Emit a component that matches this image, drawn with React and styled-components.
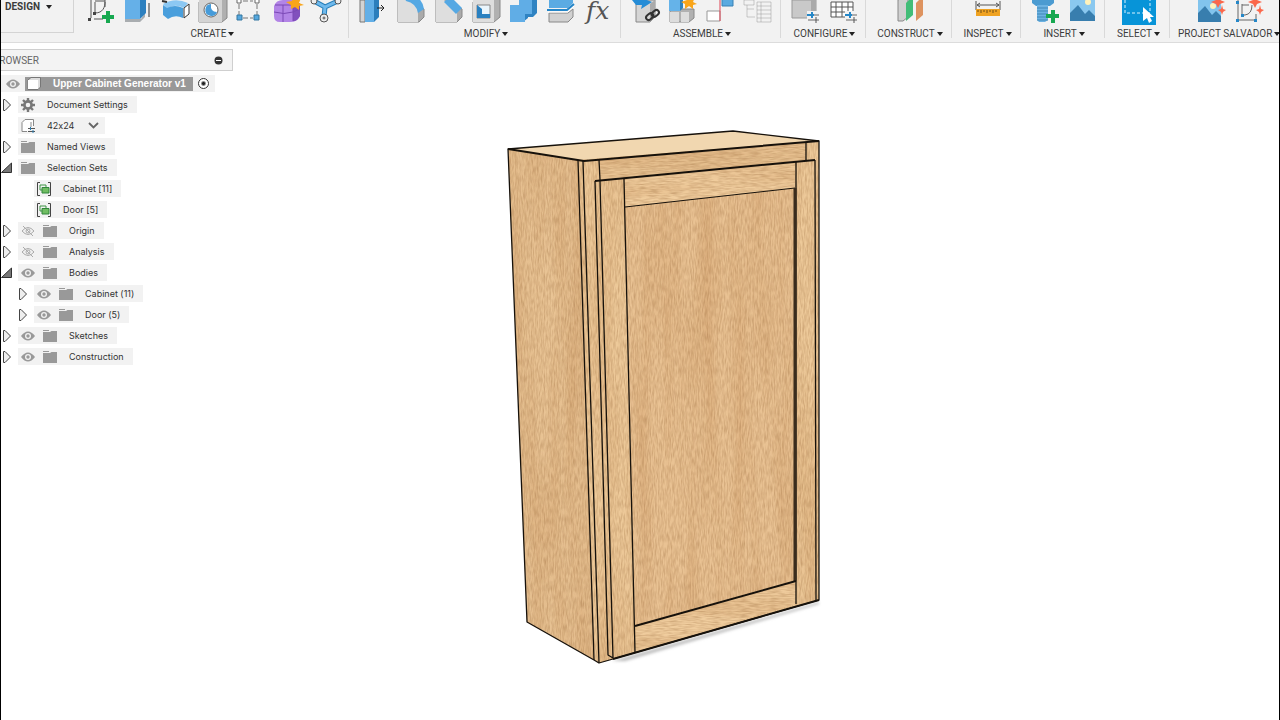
import styled, {createGlobalStyle, css} from "styled-components"

const GlobalStyle = createGlobalStyle`
  * {
    box-sizing: border-box;
  }

  body {
    margin: 0;
    background: #fff;
    font-family: "Liberation Sans", Arial, sans-serif;
  }

  button {
    margin: 0;
    padding: 0;
    border: 0;
    background: none;
    font: inherit;
    color: inherit;
  }
`

const Page = styled.div`
  display: flex;
  flex-direction: column;
  min-height: 100vh;
  overflow: hidden;
  border: 0 solid #000;
  border-width: 0 1px;
  background: #fff;
`

const Toolbar = styled.header`
  display: flex;
  height: 43px;
  overflow: hidden;
  background: #f2f2f2;
  border-bottom: 1px solid #dcdcdc;
  font-family: Roboto, sans-serif;
  font-size: 10px;
  line-height: 12px;
  color: #3c3c3c;
`

const WorkspaceButton = styled.button`
  flex: none;
  display: flex;
  align-items: flex-start;
  gap: 6px;
  width: 73px;
  height: 33px;
  padding: 1px 0 0 4px;
  border: solid #d4d4d4;
  border-width: 0 1px 1px 0;
  font-weight: 700;
`

const Group = styled.section`
  flex: ${props => props.$last ? "1 0" : "0 0"} ${props => props.$width}px;
  display: flex;
  flex-direction: column;
  align-items: center;
  gap: 2px;
  padding-left: ${props => props.$last ? 8 : 2}px;

  ${props => !props.$last && css`
    background: linear-gradient(#d9d9d9, #d9d9d9) right top / 1px 38px no-repeat;
  `}
`

const Tools = styled.div`
  display: flex;
  gap: 6px;
  height: 26px;
`

const Tool = styled.button`
  display: block;
  width: 32px;
  height: 26px;

  svg {
    display: block;
  }
`

const GroupMenu = styled.button`
  display: flex;
  align-items: center;
  gap: 2px;
  white-space: nowrap;
`

const Caret = styled.span`
  width: 0;
  margin-top: ${props => props.$low ? 4 : 0}px;
  border: 3px solid transparent;
  border-top: 4px solid #222;
  border-bottom: 0;
`

const Workspace = styled.main`
  flex: 1;
  display: grid;
  grid-template-columns: minmax(0, 1fr);
  align-items: start;

  > * {
    grid-area: 1 / 1;
  }
`

const Browser = styled.aside`
  z-index: 1;
  justify-self: start;
  width: 232px;
  padding-top: 6px;
  font-size: 10px;
  color: #333;
`

const BrowserHeader = styled.div`
  display: flex;
  align-items: center;
  justify-content: space-between;
  height: 22px;
  margin-left: -9px;
  padding-right: 9px;
  border: 1px solid #cfcfcf;
  background: #f3f3f3;
`

const BrowserTitle = styled.h2`
  margin: 0;
  font-family: Roboto, sans-serif;
  font-size: 10px;
  font-weight: 400;
  color: #666;
`

const Collapse = styled.button`
  display: block;
  width: 9px;
  height: 9px;

  svg {
    display: block;
  }
`

const Tree = styled.ul`
  display: flex;
  flex-direction: column;
  gap: 4px;
  margin: 0;
  padding: 4px 0 0;
  list-style: none;
`

const Row = styled.li`
  display: flex;
  align-items: center;
  gap: 6px;
  height: 17px;
  padding-left: ${props => props.$level * 16}px;
`

const Expander = styled.button`
  width: 11px;
  height: 14px;

  svg {
    display: block;
  }
`

// calt is off so that Inter keeps the x in sizes such as 42x24
const Chip = styled.div`
  display: flex;
  align-items: center;
  gap: 8px;
  height: 17px;
  padding: 0 ${props => props.$menu ? 6 : 9}px 0 3px;
  background: #f2f2f2;
  font-family: Inter, "Liberation Sans", sans-serif;
  font-feature-settings: "calt" 0;
  font-size: 9px;

  svg {
    flex: none;
  }
`

const Label = styled.span`
  padding: 0 ${props => props.$menu ? 6 : 0}px 0 4px;
  white-space: nowrap;
`

const RootChip = styled(Chip)`
  gap: 5px;
  padding: 0 6px 0 5px;
`

const RootName = styled.div`
  display: flex;
  align-items: center;
  gap: 8px;
  height: 14px;
  padding: 0 7px 0 2px;
  background: #989898;
  color: #fff;
  font-family: "Liberation Sans", Arial, sans-serif;
  font-size: 10px;
  font-weight: 700;
`

const Radio = styled.input`
  appearance: none;
  width: 11px;
  height: 11px;
  margin: 0;
  border: 1px solid #333;
  border-radius: 50%;
  background: radial-gradient(circle, #222 0 1px, #fff 3px);
`

const Scene = styled.svg`
  justify-self: center;
  margin-top: 77px;
`

const toolArt = {
    sketch: <>
        <path d="M8 0V18M11 19H20M22 0V7" stroke="#555" fill="none"/>
        <path d="M12 13V2M12 13C20 13 22 7 22 2M12 1H22" stroke="#555" fill="none"/>
        <path d="M5 18h3v3h-3zM10 12h3v3h-3z" fill="#444"/>
        <path d="M23 11h4v4h4v4h-4v4h-4v-4h-4v-4h4z" fill="#17a850"/>
    </>,
    extrude: <>
        <path d="M4 18L20 19L24 13V17L19 22H4z" fill="#a9adb0"/>
        <path d="M4 0H19V19H4z" fill="#65b0e8"/>
        <path d="M19 0H25V13L19 19z" fill="#2d80bf"/>
        <path d="M28 3V17" stroke="#333"/>
    </>,
    revolve: <>
        <path d="M4 4Q16 -3 29 3L25 8Q15 3 8 9z" fill="#8cc8f3"/>
        <path d="M4 5L8 8Q16 4 24 8V18Q16 14 9 19L4 15z" fill="#4a9fdc"/>
        <path d="M25 8L30 4V14L25 18z" fill="#fff" stroke="#333"/>
        <path d="M3 1L8 2" stroke="#333" strokeWidth="2"/>
    </>,
    hole: <>
        <path d="M2 2L7 -2H30V18L25 22H2z" fill="#b0b0b0" stroke="#888"/>
        <path d="M2 0H25V22H2z" fill="#d4d4d4"/>
        <circle cx="14" cy="10" r="7" fill="#fff" stroke="#666"/>
        <path d="M14 4A6 6 0 1 0 20 12Q13 12 14 4" fill="#469bd9"/>
    </>,
    pattern: <>
        <path d="M4 4V16M8 18H18M8 1H18M22 4V15" stroke="#777" strokeDasharray="5 2"/>
        <path d="M2 -2h4v5h-4zM20 -2h4v5h-4z" fill="#fff" stroke="#666"/>
        <path d="M2 15h5v5h-5zM19 15h5v5h-5z" fill="#56a8df" stroke="#34769f"/>
    </>,
    form: <>
        <path d="M1 6Q3 0 10 0H20Q28 1 27 8V16Q24 22 17 22H7Q1 22 1 16z" fill="#b284e6"/>
        <path d="M20 6L27 3V16Q24 22 20 21z" fill="#8150bd"/>
        <path d="M1 12Q11 15 20 12L27 9M10 5V22M2 5H21M20 5V21" fill="none" stroke="#7a48b5"/>
        <path d="M21 -5L23 0L28 -2L26 3L31 5L26 6L26 10L22 7L18 9V5L13 2L19 1z" fill="#f9a51a"/>
    </>,
    automate: <>
        <path d="M3 1L14 7L27 1M14 7L13 17" fill="none" stroke="#247db8" strokeWidth="5"/>
        <path d="M3 1L14 7L27 1M14 7L13 17" fill="none" stroke="#6fb9ec" strokeWidth="3"/>
        <circle cx="13" cy="18" r="4" fill="#eee" stroke="#555"/>
        <circle cx="13" cy="18" r="1" fill="none" stroke="#555"/>
        <circle cx="3" cy="1" r="3" fill="#eee" stroke="#555"/>
        <circle cx="27" cy="1" r="3" fill="#eee" stroke="#555"/>
    </>,
    pressPull: <>
        <path d="M4 0H9V22H4z" fill="#d3d3d3" stroke="#777"/>
        <path d="M9 0H18V22H9z" fill="#62afe7"/>
        <path d="M18 0H23V17L18 22z" fill="#2b7ebc"/>
        <path d="M21 8H28M25 5L28 8L25 11" fill="none" stroke="#222"/>
    </>,
    fillet: <>
        <path d="M4 -2H12L30 9V17L25 22H4z" fill="#aaa" stroke="#888"/>
        <path d="M4 0H12Q24 3 24 14V22H4z" fill="#dedede"/>
        <path d="M10 -4L12 1Q22 3 24 13L30 9Q29 0 20 -5z" fill="#55a8e3"/>
    </>,
    chamfer: <>
        <path d="M4 -2H12L30 9V17L25 22H4z" fill="#aaa" stroke="#888"/>
        <path d="M4 0H12L25 13V22H4z" fill="#dedede"/>
        <path d="M12 2L18 -4L30 8L24 14z" fill="#55a8e3"/>
    </>,
    shell: <>
        <path d="M3 2L8 -2H30V17L24 22H3z" fill="#b1b1b1" stroke="#888"/>
        <path d="M3 0H24V22H3z" fill="#dedede"/>
        <path d="M7 5H20V18H7z" fill="#eaf5fc" stroke="#888"/>
        <path d="M7 5L12 9V14H20V18H7z" fill="#2980c0"/>
    </>,
    combine: <>
        <path d="M11 1L14 -2H29V13L25 17H20V18L15 22H3V5H11z" fill="#2f83c2"/>
        <path d="M2 5H11V0H24V14H17V22H2z" fill="#60ade6"/>
    </>,
    split: <>
        <path d="M3 0H22L27 -3V3L22 8H3z" fill="#5babe3"/>
        <path d="M3 13H22L27 9V17L22 22H3z" fill="#d1d1d1" stroke="#888"/>
        <path d="M1 10H21L28 4" fill="none" stroke="#2586c8" strokeWidth="2"/>
        <path d="M2 12H22L28 6" fill="none" stroke="#fff"/>
    </>,
    parameters: <text x="2" y="19" fill="#555" fontFamily="DejaVu Serif, serif" fontStyle="italic" fontSize="25">fx</text>,
    insertPart: <>
        <path d="M7 4L12 0H26V17L21 22H7z" fill="#d5d5d5" stroke="#888"/>
        <path d="M21 4L26 0V17L21 22z" fill="#aaa"/>
        <path d="M3 0H12L10 -3L23 2L12 9L13 5H7z" fill="#258cd6"/>
        <g fill="none" stroke="#333" strokeWidth="2">
            <rect x="17" y="14" width="8" height="5" rx="3" transform="rotate(-40 21 17)"/>
            <rect x="22" y="11" width="8" height="5" rx="3" transform="rotate(-40 26 13)"/>
        </g>
    </>,
    component: <>
        <path d="M3 11L6 9H27V18L22 22H3z" fill="#b1b1b1" stroke="#888"/>
        <path d="M3 12H12V22H3zM14 12H22V22H14z" fill="#ddd"/>
        <path d="M2 0H13V11H2z" fill="#65b3e9"/>
        <path d="M13 0L16 -2V8L13 11z" fill="#2e82bf"/>
        <path d="M21 -5L23 -1L28 -3L26 2L30 4L26 5V9L22 6L18 9V4L14 2L20 0z" fill="#f9a51a"/>
    </>,
    joint: <>
        <path d="M2 11H15V21H2z" fill="#fff" stroke="#999"/>
        <path d="M17 -4H28V6H17z" fill="#5aaae0" stroke="#3881b5"/>
        <path d="M15 0V21" stroke="#df4554"/>
    </>,
    bom: <g opacity=".4" stroke="#888" fill="none">
        <path d="M1 0H11V5H1zM4 5V17H12M4 9H11M14 2H28V22H14zM14 6H28M14 10H28M14 14H28M14 18H28M18 2V22"/>
    </g>,
    configure: <>
        <path d="M2 0H21L26 -4V14L21 18H2z" fill="#c9c9c9" stroke="#999"/>
        <path d="M21 0L26 -4V14L21 18z" fill="#aaa"/>
        <path d="M17 11H30V23H17z" fill="#f2f2f2"/>
        <path d="M18 15H29M18 20H29" stroke="#666"/>
        <path d="M22 12V18M17 15H24" stroke="#2687c7" strokeWidth="2"/>
        <path d="M26 17V23" stroke="#555"/>
    </>,
    table: <>
        <path d="M3 2H25V17H3zM3 7H25M3 12H25M8 2V17M14 2V17M20 2V17M2 -1H27" fill="#fff" stroke="#555"/>
        <path d="M17 11H30V23H17z" fill="#f2f2f2"/>
        <path d="M18 15H29M18 20H29" stroke="#666"/>
        <path d="M22 12V18M17 15H24" stroke="#2687c7" strokeWidth="2"/>
        <path d="M26 17V23" stroke="#555"/>
    </>,
    plane: <>
        <path d="M4 0L9 -3H14V17L9 21H4z" fill="#d1d1d1" stroke="#888"/>
        <path d="M12 3L19 -4V15L12 21z" fill="#42bd77"/>
        <path d="M22 3L29 -4V15L22 21z" fill="#de935f"/>
    </>,
    measure: <>
        <path d="M4 1V10M28 1V10M5 5H27M8 3L5 5L8 7M24 3L27 5L24 7" fill="none" stroke="#555"/>
        <path d="M4 9H28V16H4z" fill="#efa221"/>
        <path d="M6 10V12M9 10V13M12 10V12M15 10V13M18 10V12M21 10V13M24 10V12" stroke="#6e4c17"/>
    </>,
    fastener: <>
        <path d="M3 -3H25V3L21 6H7L3 3z" fill="#4b9bd1"/>
        <path d="M8 5H19V20L16 22H10L8 20z" fill="#6cb2e2"/>
        <path d="M8 8H19M8 11H19M8 14H19M8 17H19M8 20H19" stroke="#3f87b8"/>
        <path d="M22 10h4v4h4v4h-4v5h-4v-5h-5v-4h5z" fill="#17a850"/>
    </>,
    image: <>
        <path d="M3 -4H28V21H3z" fill="#8ac8ef"/>
        <circle cx="21" cy="2" r="3" fill="#fff2bb"/>
        <path d="M3 13L11 5L18 14L22 10L28 16V21H3z" fill="#387eae"/>
    </>,
    select: <>
        <path d="M-1 0H33V25H-1z" fill="#0794d8"/>
        <path d="M2 0V13H27V0" fill="none" stroke="#d9f2ff" strokeDasharray="3 2"/>
        <path d="M20 7V21L24 18L26 23L29 21L27 17H31z" fill="#fff"/>
    </>,
    aiImage: <>
        <path d="M4 -4H27V22H4z" fill="#82c4ed"/>
        <circle cx="19" cy="6" r="3" fill="#fff2bb"/>
        <path d="M4 13L11 6L18 15L22 11L27 16V22H4z" fill="#387eae"/>
        <path d="M24 -5L26 0L31 2L26 4L24 8L22 4L17 2L22 0zM28 5L29 9L32 10L29 12L28 15L27 12L24 10L27 9z" fill="#fb684b"/>
    </>,
    aiSketch: <>
        <path d="M6 0V20H24V14M10 4V15H13Q20 14 20 5M10 5H17" fill="none" stroke="#666"/>
        <path d="M4 1h3v3h-3zM4 19h3v3h-3zM22 19h3v3h-3zM9 14h3v3h-3z" fill="#2687c7"/>
        <path d="M23 -5L25 0L30 2L25 4L23 8L21 4L16 2L21 0zM28 5L29 9L32 10L29 12L28 15L27 12L24 10L27 9z" fill="#fb684b"/>
    </>,
}

const groups = [
    {name: "CREATE", width: 275, tools: ["sketch", "extrude", "revolve", "hole", "pattern", "form", "automate"]},
    {name: "MODIFY", width: 272, tools: ["pressPull", "fillet", "chamfer", "shell", "combine", "split", "parameters"]},
    {name: "ASSEMBLE", width: 160, tools: ["insertPart", "component", "joint", "bom"]},
    {name: "CONFIGURE", width: 85, tools: ["configure", "table"]},
    {name: "CONSTRUCT", width: 86, tools: ["plane"]},
    {name: "INSPECT", width: 69, tools: ["measure"]},
    {name: "INSERT", width: 84, tools: ["fastener", "image"]},
    {name: "SELECT", width: 65, tools: ["select"]},
    {name: "PROJECT SALVADOR", width: 110, tools: ["aiImage", "aiSketch"]},
]

const EyeIcon = ({off}) => (
    <svg width="14" height="12" viewBox="0 0 14 12">
        {off ? (
            <g fill="none" stroke="#aaa">
                <path d="M1 6Q7 -1 13 6Q7 13 1 6z"/>
                <circle cx="7" cy="6" r="2"/>
                <path d="M2 1L12 11"/>
            </g>
        ) : (
            <>
                <path d="M0 6Q7 -3 14 6Q7 15 0 6z" fill="#999"/>
                <circle cx="7" cy="6" r="3" fill="#f2f2f2"/>
                <circle cx="7" cy="6" r="1.7" fill="#999"/>
            </>
        )}
    </svg>
)

const FolderIcon = () => (
    <svg width="14" height="12" viewBox="0 0 14 12">
        <path d="M0 0H6V1H0zM0 2H7L8.500 1H14V12H0z" fill="#999"/>
    </svg>
)

const GearIcon = () => (
    <svg width="14" height="14" viewBox="0 0 14 14">
        <circle cx="7" cy="7" r="3.600" fill="none" stroke="#777" strokeWidth="2.600"/>
        <path d="M7 0V3M7 11V14M0 7H3M11 7H14M2 2L4 4M10 10L12 12M2 12L4 10M10 4L12 2" stroke="#777" strokeWidth="2.400"/>
    </svg>
)

const CubeIcon = () => (
    <svg width="14" height="13" viewBox="0 0 14 13">
        <path d="M1 3L4 .5H13.500V10L11 12.500H1z" fill="#ddd" stroke="#777"/>
        <path d="M1 3H11V12H1z" fill="#fff"/>
    </svg>
)

const ConfigIcon = () => (
    <svg width="14" height="14" viewBox="0 0 14 14">
        <path d="M6 12.500H1V3.500L4 .5H12.500V7M10 3V8" fill="#fff" stroke="#888"/>
        <path d="M7 9.500H14M7 12.500H14" stroke="#555"/>
        <path d="M9.500 8V11M12 11V14" stroke="#2a7fb5"/>
    </svg>
)

const SetIcon = () => (
    <svg width="14" height="14" viewBox="0 0 14 14">
        <path d="M3 .5H.5V13.500H3M11 .5H13.500V13.500H11" fill="none" stroke="#444"/>
        <path d="M3 3H9V8H3z" fill="none" stroke="#3d9444"/>
        <path d="M5 5.500H12V11H5z" fill="#70bd62" stroke="#31853b"/>
    </svg>
)

const ChevronIcon = () => (
    <svg width="11" height="7" viewBox="0 0 11 7">
        <path d="M1 1L5.500 5.500L10 1" fill="none" stroke="#666" strokeWidth="1.800"/>
    </svg>
)

const icons = {
    eye: EyeIcon,
    eyeOff: () => <EyeIcon off/>,
    folder: FolderIcon,
    gear: GearIcon,
    config: ConfigIcon,
    set: SetIcon,
}

const nodes = [
    {name: "Document Settings", icons: ["gear"], state: "closed"},
    {name: "42x24", icons: ["config"], menu: true},
    {name: "Named Views", icons: ["folder"], state: "closed"},
    {name: "Selection Sets", icons: ["folder"], state: "open"},
    {name: "Cabinet [11]", icons: ["set"], level: 1},
    {name: "Door [5]", icons: ["set"], level: 1},
    {name: "Origin", icons: ["eyeOff", "folder"], state: "closed"},
    {name: "Analysis", icons: ["eyeOff", "folder"], state: "closed"},
    {name: "Bodies", icons: ["eye", "folder"], state: "open"},
    {name: "Cabinet (11)", icons: ["eye", "folder"], state: "closed", level: 1},
    {name: "Door (5)", icons: ["eye", "folder"], state: "closed", level: 1},
    {name: "Sketches", icons: ["eye", "folder"], state: "closed"},
    {name: "Construction", icons: ["eye", "folder"], state: "closed"},
]

const TreeRow = ({node}) => (
    <Row $level={node.level || 0}>
        <Expander disabled={!node.state} aria-label={"Toggle " + node.name}>
            <svg width="11" height="14" viewBox="0 0 11 14">
                {node.state === "closed" && <path d="M2.500 1.500V12.500H4L9.500 7L4 1.500z" fill="#eee" stroke="#444"/>}
                {node.state === "open" && <path d="M.5 11.500H10.500V2z" fill="#777" stroke="#333"/>}
            </svg>
        </Expander>
        <Chip $menu={node.menu}>
            {node.icons.map(name => {
                const Icon = icons[name]
                return <Icon key={name}/>
            })}
            <Label $menu={node.menu}>{node.name}</Label>
            {node.menu && <ChevronIcon/>}
        </Chip>
    </Row>
)

// Fine streaks along the grain, over broad darker bands
const Grain = ({id, fine, broad}) => (
    <filter id={id} x="0" y="0" width="100%" height="100%" colorInterpolationFilters="sRGB">
        <feTurbulence type="fractalNoise" baseFrequency={fine} numOctaves="2" seed="4"/>
        <feColorMatrix values="0 0 0 0 .55  0 0 0 0 .36  0 0 0 0 .18  .6 0 0 0 -.2"/>
        <feComposite in2="SourceGraphic" operator="in" result="streaks"/>
        <feTurbulence type="fractalNoise" baseFrequency={broad} numOctaves="2" seed="11"/>
        <feColorMatrix values="0 0 0 0 .70  0 0 0 0 .45  0 0 0 0 .22  .4 0 0 0 -.15"/>
        <feComposite in2="SourceGraphic" operator="in" result="bands"/>
        <feMerge>
            <feMergeNode in="SourceGraphic"/>
            <feMergeNode in="bands"/>
            <feMergeNode in="streaks"/>
        </feMerge>
    </filter>
)

const Cabinet = () => (
    <Scene width="380" height="550" viewBox="450 120 380 550" role="img" aria-label="Upper cabinet">
        <defs>
            <Grain id="grain-v" fine="0.7 0.12" broad="0.06 0.005"/>
            <Grain id="grain-h" fine="0.1 0.7" broad="0.005 0.06"/>
            <filter id="soft"><feGaussianBlur stdDeviation="1.500"/></filter>
            <linearGradient id="side" x1="0" x2="1" y1="0" y2="0">
                <stop offset="0" stopColor="#e4bd8d"/>
                <stop offset=".5" stopColor="#e9c495"/>
                <stop offset="1" stopColor="#e2ba8a"/>
            </linearGradient>
        </defs>
        <path d="M612 661L819 602V604L625 661z" fill="#bbb" filter="url(#soft)"/>
        <path d="M508 149L733 131L819 141L584 161z" fill="#f1d7b0"/>
        <g filter="url(#grain-v)">
            <path d="M508 149L579 160L594 660L527 622z" fill="url(#side)"/>
            <path d="M578 160L819 141V600L599 663L594 660z" fill="#edc999"/>
            <path d="M625 207L795 188V580L635 626z" fill="#e9c293"/>
        </g>
        <g filter="url(#grain-h)">
            <path d="M599 159L806 142V160L600 180z" fill="#e9c494"/>
            <path d="M624 178L795 162V188L625 207z" fill="#f0cd9e"/>
            <path d="M635 626L796 581V604L635 652z" fill="#f0cd9e"/>
        </g>
        <g fill="none" stroke="#16110b" strokeLinejoin="round">
            <path d="M508 149L733 131L819 141V600L599 663L594 660L527 622z" strokeWidth="1.300"/>
            <path d="M508 149L584 161L819 141" strokeWidth="2"/>
            <path d="M578 160L594 660M583 161L599 663M599 160L600 180M806 142V160" strokeWidth="1.300"/>
            <path d="M595 181L815 160" strokeWidth="2"/>
            <path d="M595 181L608 655L613 658M600 181L613 658M815 160L816 600M624 179L635 652M796 162V604" strokeWidth="1.300"/>
            <path d="M625 207L795 188"/>
            <path d="M795 188V581" stroke="#3a2c1d" strokeWidth="3"/>
            <path d="M635 626L796 581M613 659L819 600" strokeWidth="2"/>
        </g>
    </Scene>
)

const App = () => (
    <Page>
        <GlobalStyle/>
        <Toolbar>
            <WorkspaceButton>DESIGN <Caret $low/></WorkspaceButton>
            {groups.map((group, i) => (
                <Group key={group.name} $width={group.width} $last={i === groups.length - 1}>
                    <Tools>
                        {group.tools.map(tool => (
                            <Tool key={tool} aria-label={tool}>
                                <svg width="32" height="26" viewBox="0 0 32 26" overflow="visible">{toolArt[tool]}</svg>
                            </Tool>
                        ))}
                    </Tools>
                    <GroupMenu>{group.name} <Caret/></GroupMenu>
                </Group>
            ))}
        </Toolbar>
        <Workspace>
            <Cabinet/>
            <Browser>
                <BrowserHeader>
                    <BrowserTitle>BROWSER</BrowserTitle>
                    <Collapse aria-label="Collapse browser">
                        <svg width="9" height="9" viewBox="0 0 9 9">
                            <circle cx="4.500" cy="4.500" r="4" fill="#333"/>
                            <path d="M2 4.500H7" stroke="#fff"/>
                        </svg>
                    </Collapse>
                </BrowserHeader>
                <Tree>
                    <Row $level={0}>
                        <RootChip>
                            <EyeIcon/>
                            <RootName>
                                <CubeIcon/>
                                <Label>Upper Cabinet Generator v1</Label>
                            </RootName>
                            <Radio type="radio" name="active" defaultChecked aria-label="Activate Upper Cabinet Generator v1"/>
                        </RootChip>
                    </Row>
                    {nodes.map(node => <TreeRow key={node.name} node={node}/>)}
                </Tree>
            </Browser>
        </Workspace>
    </Page>
)

export default App
